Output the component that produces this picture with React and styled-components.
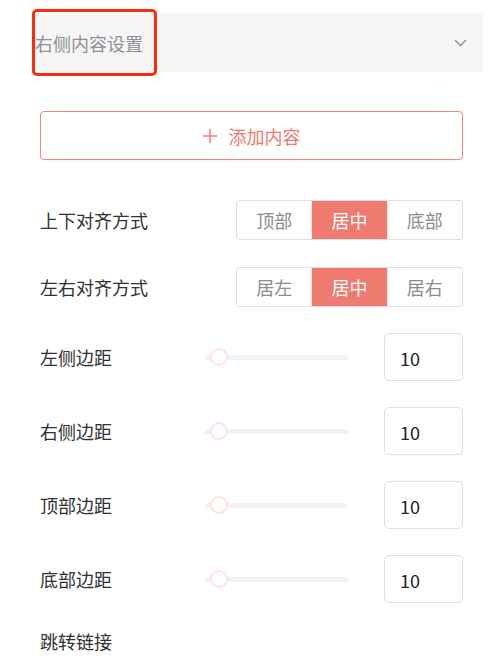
import React from "react";
import styled, { createGlobalStyle } from "styled-components";

const GlobalStyle = createGlobalStyle`
  body {
    margin: 0;
    background: #fff;
    font-family: "Noto Sans CJK SC", "Noto Sans", sans-serif;
  }
`;

const Page = styled.div`
  width: 493px;
  height: 663px;
  overflow: hidden;
  padding-top: 13px;
  box-sizing: border-box;
`;

const Header = styled.div`
  position: relative;
  margin-left: 33px;
  width: 450px;
  height: 59px;
  background: #f6f6f6;
  display: flex;
  align-items: center;
  justify-content: space-between;
  padding: 0 16px 0 2px;
  box-sizing: border-box;
`;

const HeaderTitle = styled.span`
  font-size: 18px;
  color: #8e9096;
  line-height: 1;
`;

// annotation box that sits over the header title
const Highlight = styled.div`
  position: absolute;
  left: -1px;
  top: -4px;
  width: 125px;
  height: 67px;
  border: 3px solid #ff2a0d;
  border-radius: 5px;
  box-sizing: border-box;
`;

const Body = styled.div`
  padding: 0 30px 0 40px;
`;

const AddButton = styled.button`
  margin-top: 39px;
  width: 100%;
  height: 49px;
  border: 1px solid #f0877e;
  border-radius: 4px;
  background: #fff;
  color: #ee7a70;
  font-family: inherit;
  font-size: 18px;
  display: flex;
  align-items: center;
  justify-content: center;
  gap: 12px;
  box-shadow: 0 1px 2px rgba(0, 0, 0, 0.04);
`;

const Row = styled.div`
  display: flex;
  align-items: center;
  margin-top: ${(p) => p.$gap}px;
  height: ${(p) => p.$h}px;
`;

const Label = styled.span`
  font-size: 18px;
  color: #303133;
  width: ${(p) => p.$w || 165}px;
  flex-shrink: 0;
`;

const Segments = styled.div`
  margin-left: auto;
  display: flex;
  width: 227px;
  height: 40px;
  border: 1px solid #dcdfe6;
  border-radius: 3px;
  box-sizing: border-box;
  overflow: hidden;
`;

const Segment = styled.div`
  flex: 1;
  display: flex;
  align-items: center;
  justify-content: center;
  font-size: 18px;
  color: ${(p) => (p.$active ? "#fff" : "#8c8c8c")};
  background: ${(p) => (p.$active ? "#ee7a70" : "#fff")};
  & + & {
    border-left: 1px solid #e4e4e4;
  }
`;

const Slider = styled.div`
  position: relative;
  width: 143px;
  height: 5px;
  border-radius: 3px;
  background: #f2f2f2;
`;

const SliderFill = styled.div`
  height: 100%;
  border-radius: 3px 0 0 3px;
  background: #fdecea;
`;

const Thumb = styled.div`
  position: absolute;
  top: 50%;
  width: 18px;
  height: 18px;
  margin: -9px 0 0 -9px;
  border: 2px solid #fde4e1;
  border-radius: 50%;
  background: #fff;
  box-sizing: border-box;
`;

const NumberBox = styled.div`
  margin-left: auto;
  width: 79px;
  height: 48px;
  border: 1px solid #dcdfe6;
  border-radius: 5px;
  box-sizing: border-box;
  display: flex;
  align-items: center;
  padding: 2px 0 0 15px;
  font-size: 18px;
  color: #222;
`;

const Chevron = () => (
  <svg width="13" height="8" viewBox="0 0 13 8" fill="none">
    <polyline points="1,1 6.5,6.5 12,1" stroke="#8e9096" strokeWidth="1.3" />
  </svg>
);

const Plus = () => (
  <svg width="14" height="14" viewBox="0 0 14 14">
    <path d="M7 0v14M0 7h14" stroke="#ee7a70" strokeWidth="1.4" />
  </svg>
);

const alignRows = [
  { label: "上下对齐方式", options: ["顶部", "居中", "底部"], gap: 40 },
  { label: "左右对齐方式", options: ["居左", "居中", "居右"], gap: 27 },
];

const spacingRows = [
  { label: "左侧边距", value: 10, gap: 26 },
  { label: "右侧边距", value: 10, gap: 26 },
  { label: "顶部边距", value: 10, gap: 26 },
  { label: "底部边距", value: 10, gap: 26 },
];

export default function App() {
  return (
    <Page>
      <GlobalStyle />
      <Header>
        <HeaderTitle>右侧内容设置</HeaderTitle>
        <Chevron />
        <Highlight />
      </Header>
      <Body>
        <AddButton>
          <Plus />
          添加内容
        </AddButton>
        {alignRows.map((r) => (
          <Row key={r.label} $gap={r.gap} $h={40}>
            <Label>{r.label}</Label>
            <Segments>
              {r.options.map((o, i) => (
                <Segment key={o} $active={i === 1}>
                  {o}
                </Segment>
              ))}
            </Segments>
          </Row>
        ))}
        {spacingRows.map((r) => (
          <Row key={r.label} $gap={r.gap} $h={48}>
            <Label>{r.label}</Label>
            <Slider>
              <SliderFill style={{ width: `${r.value / 1.2}%` }} />
              <Thumb style={{ left: `${r.value}%` }} />
            </Slider>
            <NumberBox>{r.value}</NumberBox>
          </Row>
        ))}
        <Row $gap={26} $h={24}>
          <Label>跳转链接</Label>
        </Row>
      </Body>
    </Page>
  );
}
